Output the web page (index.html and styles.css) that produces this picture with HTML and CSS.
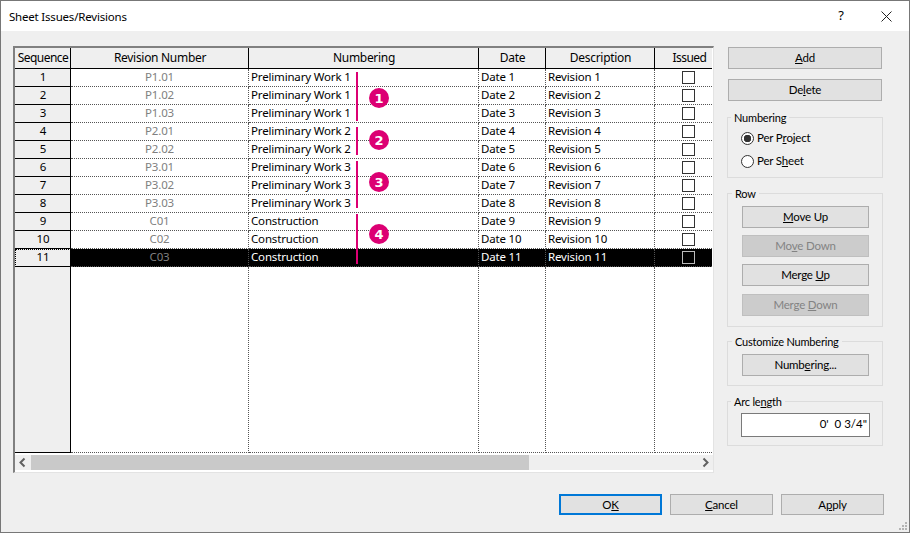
FILE: index.html
```html
<!DOCTYPE html>
<html lang="en">
<head>
    <meta charset="UTF-8">
    <meta name="viewport" content="width=device-width, initial-scale=1.0">
    <title>Sheet Issues/Revisions</title>
    <link rel="stylesheet" href="styles.css">
</head>
<body>
    <div class="window">
        <div class="titlebar">
            <span class="title">Sheet Issues/Revisions</span>
            <span class="help">?</span>
            <svg class="close" width="11" height="11" viewBox="0 0 11 11"><path d="M0.5 0.5L10.5 10.5M10.5 0.5L0.5 10.5" stroke="#222" fill="none"/></svg>
        </div>

        <div class="main">
            <div class="grid-frame">
                <div class="grid-area">
                    <table class="grid">
                        <colgroup>
                            <col class="col-seq"><col class="col-rev"><col class="col-num"><col class="col-date"><col class="col-desc"><col class="col-issued">
                        </colgroup>
                        <thead>
                            <tr><th class="tight">Sequence</th><th>Revision Number</th><th>Numbering</th><th>Date</th><th>Description</th><th class="tight">Issued</th></tr>
                        </thead>
                        <tbody>
                            <tr><th>1</th><td class="rev">P1.01</td><td>Preliminary Work 1</td><td>Date 1</td><td>Revision 1</td><td class="issued"><span class="check"></span></td></tr>
                            <tr><th>2</th><td class="rev">P1.02</td><td>Preliminary Work 1</td><td>Date 2</td><td>Revision 2</td><td class="issued"><span class="check"></span></td></tr>
                            <tr><th>3</th><td class="rev">P1.03</td><td>Preliminary Work 1</td><td>Date 3</td><td>Revision 3</td><td class="issued"><span class="check"></span></td></tr>
                            <tr><th>4</th><td class="rev">P2.01</td><td>Preliminary Work 2</td><td>Date 4</td><td>Revision 4</td><td class="issued"><span class="check"></span></td></tr>
                            <tr><th>5</th><td class="rev">P2.02</td><td>Preliminary Work 2</td><td>Date 5</td><td>Revision 5</td><td class="issued"><span class="check"></span></td></tr>
                            <tr><th>6</th><td class="rev">P3.01</td><td>Preliminary Work 3</td><td>Date 6</td><td>Revision 6</td><td class="issued"><span class="check"></span></td></tr>
                            <tr><th>7</th><td class="rev">P3.02</td><td>Preliminary Work 3</td><td>Date 7</td><td>Revision 7</td><td class="issued"><span class="check"></span></td></tr>
                            <tr><th>8</th><td class="rev">P3.03</td><td>Preliminary Work 3</td><td>Date 8</td><td>Revision 8</td><td class="issued"><span class="check"></span></td></tr>
                            <tr><th>9</th><td class="rev">C01</td><td>Construction</td><td>Date 9</td><td>Revision 9</td><td class="issued"><span class="check"></span></td></tr>
                            <tr><th>10</th><td class="rev">C02</td><td>Construction</td><td>Date 10</td><td>Revision 10</td><td class="issued"><span class="check"></span></td></tr>
                            <tr class="selected"><th>11</th><td class="rev">C03</td><td>Construction</td><td>Date 11</td><td>Revision 11</td><td class="issued"><span class="check"></span></td></tr>
                            <tr class="filler"><th></th><td></td><td></td><td></td><td></td><td></td></tr>
                        </tbody>
                    </table>

                    <div class="bar bar-1"></div>
                    <div class="bar bar-2"></div>
                    <div class="bar bar-3"></div>
                    <div class="bar bar-4"></div>
                    <div class="badge badge-1">1</div>
                    <div class="badge badge-2">2</div>
                    <div class="badge badge-3">3</div>
                    <div class="badge badge-4">4</div>
                </div>

                <div class="scrollbar">
                    <svg class="arrow" width="16" height="15" viewBox="0 0 16 15"><path d="M9.5 3.5L5.5 7.5L9.5 11.5" stroke="#606060" stroke-width="2" fill="none"/></svg>
                    <div class="track"><div class="thumb"></div></div>
                    <svg class="arrow" width="16" height="15" viewBox="0 0 16 15"><path d="M6.5 3.5L10.5 7.5L6.5 11.5" stroke="#606060" stroke-width="2" fill="none"/></svg>
                </div>
            </div>

            <div class="side">
                <button class="btn wide"><u>A</u>dd</button>
                <button class="btn wide"><span>De<u>l</u>ete</span></button>

                <fieldset class="group group-numbering">
                    <legend>Numbering</legend>
                    <div class="radio-row"><span class="radio checked"></span>Per P<u>r</u>oject</div>
                    <div class="radio-row"><span class="radio"></span>Per S<u>h</u>eet</div>
                </fieldset>

                <fieldset class="group group-row">
                    <legend>Row</legend>
                    <button class="btn"><u>M</u>ove Up</button>
                    <button class="btn disabled">Mo<u>v</u>e Down</button>
                    <button class="btn">Merge <u>U</u>p</button>
                    <button class="btn disabled merge-down">Merge <u>D</u>own</button>
                </fieldset>

                <fieldset class="group group-custom">
                    <legend>Customize Numbering</legend>
                    <button class="btn">Numb<u>e</u>ring...</button>
                </fieldset>

                <fieldset class="group group-arc">
                    <legend>Arc le<u>n</u>gth</legend>
                    <div class="field">0'&nbsp; 0 3/4"</div>
                </fieldset>
            </div>
        </div>

        <div class="footer">
            <button class="btn foot default">O<u>K</u></button>
            <button class="btn foot"><u>C</u>ancel</button>
            <button class="btn foot">A<u>p</u>ply</button>
        </div>

        <svg class="grip" width="9" height="9" viewBox="0 0 9 9" fill="#b4b4b4">
            <rect x="6" y="0" width="2" height="2"/>
            <rect x="3" y="3" width="2" height="2"/><rect x="6" y="3" width="2" height="2"/>
            <rect x="0" y="6" width="2" height="2"/><rect x="3" y="6" width="2" height="2"/><rect x="6" y="6" width="2" height="2"/>
        </svg>
    </div>
</body>
</html>
```

FILE: styles.css
```css
* {
    box-sizing: border-box;
}

body {
    margin: 0;
    font-family: "Noto Sans", sans-serif;
    font-size: 12px;
    color: #000;
    background-color: #efefef;
}

.window {
    position: relative;
    display: flex;
    flex-direction: column;
    width: 910px;
    height: 533px;
    border: 1px solid #777;
    background-color: #efefef;
}

/* title bar */
.titlebar {
    display: flex;
    align-items: center;
    height: 30px;
    padding: 0 17px 0 8px;
    background-color: #fff;
}

.title {
    flex: 1;
    font-size: 11.5px;
    letter-spacing: -0.2px;
}

.help {
    margin-right: 37px;
    padding-bottom: 2px;
    font-size: 13px;
}

/* grid */
.main {
    display: flex;
    padding: 15px 0 0 12px;
}

.grid-frame {
    width: 701px;
    height: 427px;
    margin-right: 13px;
    border-top: 2px solid #808080;
    border-left: 2px solid #808080;
    border-right: 1px solid #e3e3e3;
    border-bottom: 1px solid #e3e3e3;
    background-color: #fff;
}

.grid-area {
    position: relative;
    height: 405px;
}

.grid {
    table-layout: fixed;
    width: 697px;
    border-collapse: separate;
    border-spacing: 0;
}

.col-seq { width: 56px; }
.col-rev { width: 178px; }
.col-num { width: 230px; }
.col-date { width: 67px; }
.col-desc { width: 109px; }
.col-issued { width: 57px; }

.grid th,
.grid td {
    height: 18px;
    padding: 0 0 2px 2px;
    font-size: 11.5px;
    font-weight: normal;
    line-height: 15px;
    letter-spacing: -0.17px;
    white-space: nowrap;
    overflow: hidden;
}

.grid thead th {
    height: 21px;
    padding: 0 0 2px 1px;
    font-size: 12px;
    letter-spacing: -0.3px;
    background-color: #efefef;
    border-right: 1px solid #000;
    border-bottom: 1px solid #000;
}

.grid thead th.tight {
    letter-spacing: -0.55px;
}

.grid thead th:last-child {
    padding-left: 12px;
    border-right: none;
}

.grid tbody th {
    padding: 0 0 2px 1px;
    background-color: #efefef;
    border-right: 1px solid #000;
    border-bottom: 1px solid #000;
}

.grid td {
    border-right: 1px dotted #555;
    border-bottom: 1px dotted #555;
}

.grid td:last-child {
    border-right: none;
}

.grid .rev {
    padding: 0 0 2px;
    text-align: center;
    color: #808080;
}

.grid .issued {
    padding: 0 0 0 10px;
    text-align: center;
}

.check {
    display: block;
    width: 13px;
    height: 13px;
    margin: 0 auto;
    border: 1px solid #333;
    background-color: #fff;
}

.selected td {
    background-color: #000;
    color: #fff;
}

.grid .selected .rev {
    color: #808080;
}

.grid .selected th {
    outline: 1px dotted #000;
    outline-offset: -1px;
}

.selected .check {
    border-color: #bbb;
    background-color: #000;
}

.grid .filler th,
.grid .filler td {
    height: 186px;
}

/* callouts over the grid */
.bar {
    position: absolute;
    left: 341px;
    width: 2px;
    background-color: #dc0073;
}

.bar-1 { top: 24px; height: 49px; }
.bar-2 { top: 79px; height: 28px; }
.bar-3 { top: 113px; height: 47px; }
.bar-4 { top: 166px; height: 50px; }

.badge {
    position: absolute;
    left: 354px;
    width: 20px;
    height: 20px;
    border-radius: 50%;
    background-color: #dc0073;
    color: #fff;
    font-family: "DejaVu Sans", sans-serif;
    font-size: 13px;
    font-weight: bold;
    line-height: 21px;
    text-align: center;
}

.badge-1 { top: 40px; }
.badge-2 { top: 82px; }
.badge-3 { top: 124px; }
.badge-4 { top: 176px; }

/* scrollbar */
.scrollbar {
    display: flex;
    height: 15px;
    margin-top: 2px;
    background-color: #efefef;
}

.arrow {
    flex: none;
}

.track {
    flex: 1;
}

.thumb {
    width: 498px;
    height: 15px;
    background-color: #c9c9c9;
}

/* right column */
.side {
    display: flex;
    flex-direction: column;
    width: 156px;
    padding-top: 1px;
    font-family: "Lato", sans-serif;
    font-size: 11px;
    letter-spacing: -0.2px;
}

.btn {
    display: block;
    width: 127px;
    height: 22px;
    padding: 0 0 1px;
    border: 1px solid #adadad;
    background-color: #e1e1e1;
    color: #000;
    font-family: "Lato", sans-serif;
    font-size: 11.5px;
    letter-spacing: -0.2px;
    text-align: center;
}

.btn.wide {
    width: 154px;
    margin: 0 0 10px 1px;
}

.btn.disabled {
    background-color: #ccc;
    border-color: #bfbfbf;
    color: #838383;
}

.group {
    margin: 0 0 7px 0;
    padding: 0 0 0 14px;
    min-width: 0;
    width: 156px;
    border: 1px solid #dcdcdc;
}

.group legend {
    margin-left: -10px;
    padding: 0 3px;
    height: 16px;
    line-height: 18px;
}

.group-numbering {
    margin-top: -2px;
    padding: 5px 0 8px 13px;
}

.group-row {
    padding-top: 5px;
    padding-bottom: 10px;
    margin-bottom: 6px;
}

.group-row .btn {
    margin-bottom: 7px;
}

.group-row .btn:last-child {
    margin-top: 8px;
    margin-bottom: 0;
}

.group-custom {
    padding-top: 5px;
    padding-bottom: 9px;
}

.group-arc {
    padding: 4px 0 8px 13px;
}

.radio-row {
    display: flex;
    align-items: center;
    height: 16px;
    padding-bottom: 2px;
    font-size: 11.5px;
}

.radio-row + .radio-row {
    margin-top: 7px;
}

.radio {
    flex: none;
    width: 13px;
    height: 13px;
    margin: 2px 3px 0 0;
    border: 1px solid #333;
    border-radius: 50%;
    background-color: #fff;
}

.radio.checked {
    background: radial-gradient(circle, #333 0 3.5px, #fff 4px);
}

.field {
    width: 129px;
    height: 24px;
    padding: 0 2px 0 0;
    border: 1px solid #7a7a7a;
    background-color: #fff;
    font-size: 11.5px;
    letter-spacing: 0;
    line-height: 20px;
    text-align: right;
}

/* bottom buttons */
.footer {
    display: flex;
    justify-content: flex-end;
    gap: 8px;
    margin-top: 21px;
    padding-right: 25px;
}

.btn.foot {
    width: 103px;
    height: 21px;
}

.btn.default {
    border: 2px solid #0078d7;
}

.grip {
    position: absolute;
    right: 1px;
    bottom: 1px;
}
```
